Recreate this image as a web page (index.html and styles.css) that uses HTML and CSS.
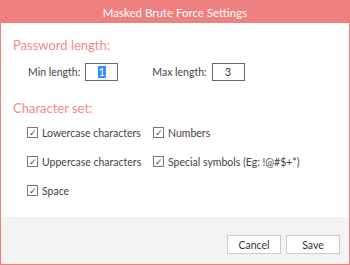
FILE: index.html
```html
<!DOCTYPE html>
<html lang="en">
<head>
    <meta charset="UTF-8">
    <title>Masked Brute Force Settings</title>
    <link rel="stylesheet" href="styles.css">
</head>
<body>
    <div class="window">
        <div class="titlebar">Masked Brute Force Settings</div>
        <div class="content">
            <h2 class="section-title">Password length:</h2>
            <div class="length-row">
                <label class="field">Min length: <span class="num-box"><span class="selected">1</span></span></label>
                <label class="field">Max length: <span class="num-box">3</span></label>
            </div>
            <h2 class="section-title charset">Character set:</h2>
            <div class="check-grid">
                <div class="check-item"><span class="check-box">✓</span> Lowercase characters</div>
                <div class="check-item"><span class="check-box">✓</span> Numbers</div>
                <div class="check-item"><span class="check-box">✓</span> Uppercase characters</div>
                <div class="check-item"><span class="check-box">✓</span> Special symbols (Eg: !@#$+*)</div>
                <div class="check-item"><span class="check-box">✓</span> Space</div>
            </div>
        </div>
        <div class="footer">
            <button class="btn">Cancel</button>
            <button class="btn">Save</button>
        </div>
    </div>
</body>
</html>
```

FILE: styles.css
```css
html, body {
    margin: 0;
    padding: 0;
    background: #ffffff;
    font-family: Lato, "Open Sans", sans-serif;
}
.window {
    width: 350px;
    height: 265px;
    box-sizing: border-box;
    border: 1px solid #f08080;
    border-top: none;
    display: flex;
    flex-direction: column;
}
.titlebar {
    height: 23px;
    margin: 0 -1px;
    background: #f08080;
    color: #ffffff;
    font-size: 11.5px;
    line-height: 25px;
    text-align: center;
}
.content {
    flex: 1;
    padding: 12px 12px 0;
    background: #ffffff;
}
.section-title {
    margin: 0;
    font-size: 13px;
    font-weight: 400;
    color: #f28a8a;
    line-height: 20px;
}
.section-title.charset {
    margin-top: 17px;
}
.length-row {
    display: flex;
    gap: 34px;
    padding: 8px 0 0 15px;
}
.field {
    display: flex;
    align-items: center;
    gap: 5px;
    font-size: 10.5px;
    color: #444444;
}
.num-box {
    width: 31px;
    height: 16px;
    border: 1px solid #666666;
    text-align: center;
    line-height: 16px;
    font-size: 10.5px;
    color: #333333;
}
.selected {
    background: #3390ff;
    color: #ffffff;
    padding: 0 1px;
}
.check-grid {
    display: grid;
    grid-template-columns: 126px auto;
    row-gap: 12px;
    padding: 6px 0 0 14px;
}
.check-item {
    display: flex;
    align-items: center;
    gap: 4px;
    font-size: 10.5px;
    color: #444444;
    height: 17px;
}
.check-box {
    width: 9px;
    height: 9px;
    border: 1px solid #777777;
    font-size: 9px;
    line-height: 9px;
    text-align: center;
    color: #444444;
}
.footer {
    height: 47px;
    background: #f3f3f3;
    display: flex;
    justify-content: flex-end;
    align-items: flex-start;
    gap: 5px;
    padding: 18px 9px 0 0;
    box-sizing: border-box;
}
.btn {
    width: 54px;
    height: 19px;
    background: #ffffff;
    border: 1px solid #cccccc;
    font-family: inherit;
    font-size: 10.5px;
    color: #333333;
    padding: 0;
}
```
